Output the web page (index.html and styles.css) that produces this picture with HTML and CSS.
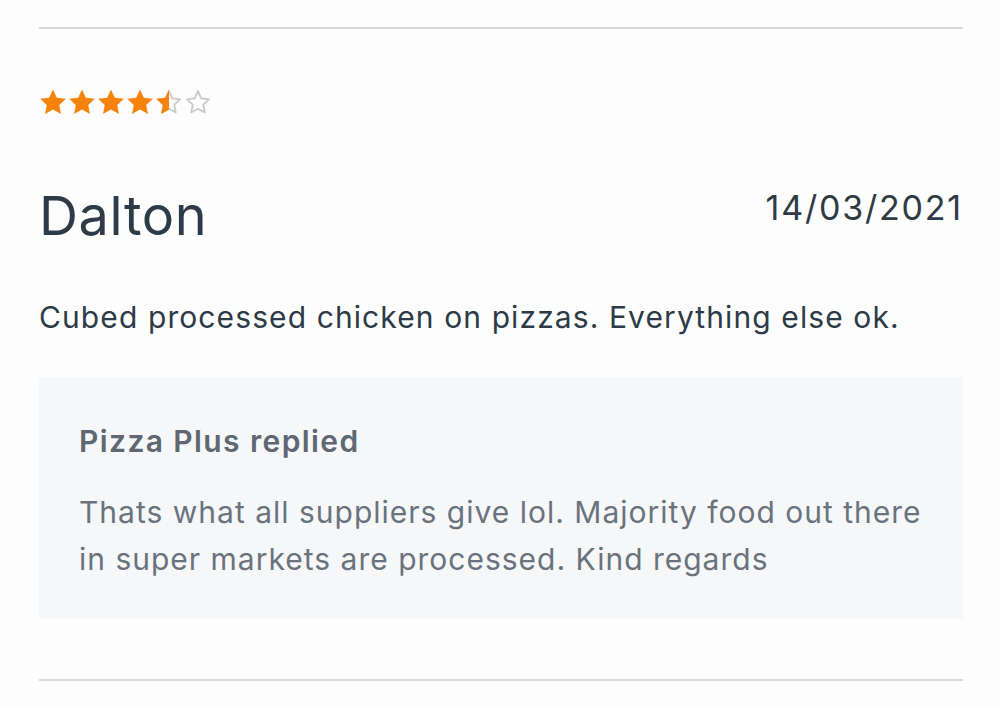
FILE: index.html
```html
<!DOCTYPE html>
<html lang="en">
<head>
<meta charset="utf-8">
<link rel="stylesheet" href="styles.css">
</head>
<body>
<div class="page">
  <hr class="rule">
  <article class="review">
    <div class="stars" aria-label="4.5 out of 5 stars">
      <svg class="star" viewBox="0 0 24 24"><path class="full" d="M12 1.2L15.29 8.27L23.03 9.22L17.33 14.53L18.82 22.18L12 18.4L5.18 22.18L6.67 14.53L0.97 9.22L8.71 8.27Z"/></svg>
      <svg class="star" viewBox="0 0 24 24"><path class="full" d="M12 1.2L15.29 8.27L23.03 9.22L17.33 14.53L18.82 22.18L12 18.4L5.18 22.18L6.67 14.53L0.97 9.22L8.71 8.27Z"/></svg>
      <svg class="star" viewBox="0 0 24 24"><path class="full" d="M12 1.2L15.29 8.27L23.03 9.22L17.33 14.53L18.82 22.18L12 18.4L5.18 22.18L6.67 14.53L0.97 9.22L8.71 8.27Z"/></svg>
      <svg class="star" viewBox="0 0 24 24"><path class="full" d="M12 1.2L15.29 8.27L23.03 9.22L17.33 14.53L18.82 22.18L12 18.4L5.18 22.18L6.67 14.53L0.97 9.22L8.71 8.27Z"/></svg>
      <svg class="star" viewBox="0 0 24 24"><path class="empty" d="M12 2.6L14.8 8.9L21.5 9.7L16.5 14.3L17.8 21L12 17.7L6.2 21L7.5 14.3L2.5 9.7L9.2 8.9Z"/><path class="full" d="M12 1.2V18.4L5.18 22.18L6.67 14.53L0.97 9.22L8.71 8.27Z"/></svg>
      <svg class="star" viewBox="0 0 24 24"><path class="empty" d="M12 2.6L14.8 8.9L21.5 9.7L16.5 14.3L17.8 21L12 17.7L6.2 21L7.5 14.3L2.5 9.7L9.2 8.9Z"/></svg>
    </div>
    <header class="head">
      <h2 class="name">Dalton</h2>
      <span class="date">14/03/2021</span>
    </header>
    <p class="text">Cubed processed chicken on pizzas. Everything else ok.</p>
    <div class="reply">
      <h3 class="reply-title">Pizza Plus replied</h3>
      <p class="reply-text">Thats what all suppliers give lol. Majority food out there in super markets are processed. Kind regards</p>
    </div>
  </article>
  <hr class="rule">
</div>
</body>
</html>
```

FILE: styles.css
```css
html, body {
  margin: 0;
  padding: 0;
  background: #fdfdfd;
}
body {
  font-family: Inter, "Noto Sans", sans-serif;
  color: #2d3a48;
}
.page {
  padding: 27px 37px 0 39px;
}
.rule {
  margin: 0;
  border: 0;
  height: 2px;
  background: #d6d9dc;
}
.review {
  padding: 59px 0 60px;
}
.stars {
  display: flex;
  gap: 1px;
  height: 28px;
}
.star {
  display: block;
  width: 28px;
  height: 28px;
}
.star .full {
  fill: #f5820a;
}
.star .empty {
  fill: none;
  stroke: #c9c9c9;
  stroke-width: 1.5;
  stroke-linejoin: round;
}
.head {
  display: flex;
  justify-content: space-between;
  align-items: flex-start;
  margin-top: 73px;
}
.name {
  margin: -6px 0 0;
  font-size: 54px;
  font-weight: 400;
  line-height: 66px;
  letter-spacing: 0.6px;
}
.date {
  font-size: 34px;
  line-height: 40px;
  font-weight: 400;
  margin-top: -1px;
  letter-spacing: 1.8px;
  color: #2f3a45;
}
.text {
  margin: 48px 0 0;
  font-size: 30px;
  line-height: 40px;
  letter-spacing: 1.1px;
  color: #2d3a48;
}
.reply {
  margin-top: 40px;
  background: #f6f7f9;
  padding: 46px 40px 36px;
}
.reply-title {
  margin: 0;
  font-size: 30px;
  font-weight: 600;
  line-height: 36px;
  letter-spacing: 1.4px;
  color: #5f6872;
}
.reply-text {
  margin: 30px 0 0;
  font-size: 30px;
  line-height: 47px;
  letter-spacing: 1px;
  color: #6a737d;
}
```
